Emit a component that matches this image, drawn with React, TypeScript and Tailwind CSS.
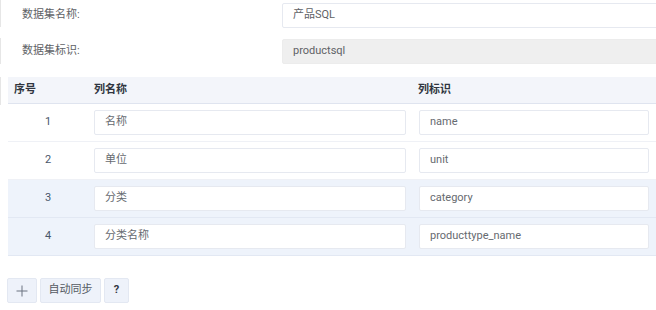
const rows = [
  { no: 1, name: "名称", key: "name", alt: false },
  { no: 2, name: "单位", key: "unit", alt: false },
  { no: 3, name: "分类", key: "category", alt: true },
  { no: 4, name: "分类名称", key: "producttype_name", alt: true },
];

function Cell({ value }: { value: string }) {
  return (
    <div className="h-[25px] flex items-center bg-white border border-[#e6e9f0] rounded-[2px] pl-[10px] text-[#666a70]">
      {value}
    </div>
  );
}

export default function App() {
  return (
    <div
      className="w-[656px] h-[310px] bg-white overflow-hidden text-[11px] text-[#606266]"
      style={{ fontFamily: 'Roboto, "Noto Sans CJK SC", sans-serif' }}
    >
      {/* form fields */}
      <div className="flex h-[27px] mt-0">
        <div className="w-px bg-[#e6e6e6]" />
        <div className="w-[281px] pl-[21px] pt-[3px] flex items-center">数据集名称:</div>
        <div className="flex-1 mt-[3px] -mr-[4px] h-[25px] flex items-center pl-[10px] bg-white border border-[#e6e9f0] rounded-[2px]">
          产品SQL
        </div>
      </div>
      <div className="flex h-[26px] mt-[11px]">
        <div className="w-px bg-[#e6e6e6]" />
        <div className="w-[281px] pl-[21px] flex items-center">数据集标识:</div>
        <div className="flex-1 mt-px -mr-[4px] h-[25px] flex items-center pl-[10px] bg-[#efefef] border border-[#ececec] rounded-[2px]">
          productsql
        </div>
      </div>

      {/* column table */}
      <div className="flex mt-[13px]">
        <div className="w-px h-[28px] bg-[#e6e6e6]" />
        <div className="ml-[7px] flex-1">
          <div className="flex h-[27px] items-center bg-[#f3f5fa] border-b border-[#dfe4ef] font-bold text-[#303540]">
            <div className="w-[80px] pl-[6px]">序号</div>
            <div className="w-[324px] pl-[6px]">列名称</div>
            <div className="flex-1 pl-[6px]">列标识</div>
          </div>
          {rows.map((r) => (
            <div
              key={r.no}
              className={
                r.alt
                  ? "flex h-[38px] items-center bg-[#eef3fb] border-b border-[#e2e8f3]"
                  : "flex h-[38px] items-center bg-white border-b border-[#eff1f6]"
              }
            >
              <div className="w-[80px] text-center text-[#48566a]">{r.no}</div>
              <div className="w-[324px] px-[6px]">
                <Cell value={r.name} />
              </div>
              <div className="flex-1 pl-[7px] pr-[7px]">
                <Cell value={r.key} />
              </div>
            </div>
          ))}
        </div>
      </div>

      {/* actions */}
      <div className="flex gap-[3px] ml-[7px] mt-[22px]">
        <button
          type="button"
          className="w-[30px] h-[25px] flex items-center justify-center bg-[#eef2fa] border border-[#e3e8f2] rounded-[2px]"
        >
          <svg width="12" height="12" viewBox="0 0 12 12" stroke="#6b7280" strokeWidth="1">
            <path d="M6 0.5v11M0.5 6h11" />
          </svg>
        </button>
        <button
          type="button"
          className="w-[61px] h-[25px] flex items-center justify-center bg-[#eef2fa] border border-[#e3e8f2] rounded-[2px] text-[#555a62]"
        >
          自动同步
        </button>
        <button
          type="button"
          className="w-[25px] h-[25px] flex items-center justify-center bg-[#eef2fa] border border-[#e3e8f2] rounded-[2px] font-bold text-[#303540]"
        >
          ?
        </button>
      </div>
    </div>
  );
}
